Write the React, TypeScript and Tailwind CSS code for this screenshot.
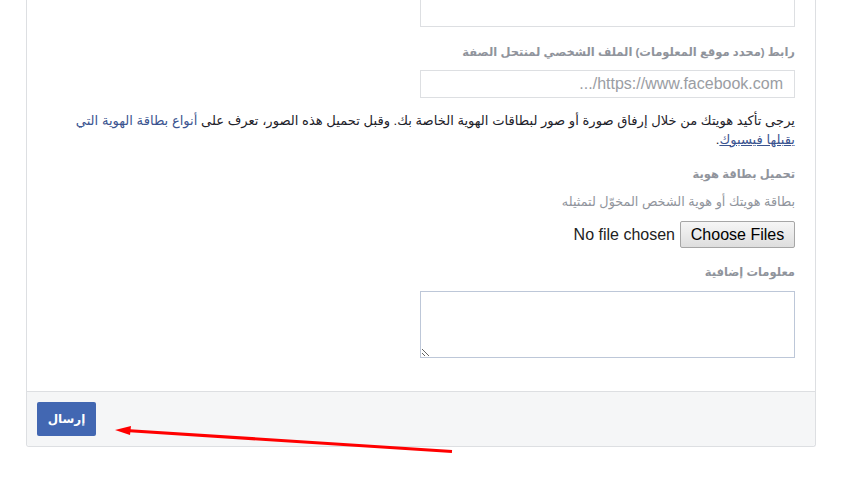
import React from "react";

// Verification form footer section (RTL), with a red annotation arrow over the submit button

const font = { fontFamily: '"Liberation Sans", "DejaVu Sans", sans-serif' };

function FileRow() {
  return (
    <div className="mt-[11px] flex items-center gap-[5px]" dir="rtl">
      <div className="flex h-[27px] w-[115px] items-center justify-center rounded-[2px] border border-[#a6a6a6] bg-gradient-to-b from-[#f6f6f6] to-[#dedede] text-[16px] text-black">
        Choose Files
      </div>
      <span className="text-[16px] text-[#222]">No file chosen</span>
    </div>
  );
}

export default function App() {
  return (
    <div className="relative h-[503px] w-[852px] overflow-hidden bg-white" style={font}>
      <div className="ml-[26px] w-[790px] rounded-b-[3px] border border-t-0 border-[#dddfe2]">
        <div dir="rtl" className="px-[20px] pb-[33px]">
          <input
            type="text"
            className="-mt-px block h-[28px] w-[375px] border border-[#dddfe2] bg-white outline-none"
          />
          <div className="mt-[17px] text-[11.5px] leading-[16px] font-bold text-[#90949c]">
            رابط (محدد موقع المعلومات) الملف الشخصي لمنتحل الصفة
          </div>
          <input
            type="text"
            placeholder="https://www.facebook.com/..."
            className="mt-[10px] block h-[28px] w-[375px] border border-[#dddfe2] bg-white px-[11px] text-[16px] outline-none placeholder:text-[#9a9da3]"
          />
          <p className="mt-[13px] text-[13.1px] leading-[19px] text-[#1d2129]">
            يرجى تأكيد هويتك من خلال إرفاق صورة أو صور لبطاقات الهوية الخاصة بك. وقبل تحميل هذه الصور، تعرف على{" "}
            <span className="text-[#3b5490]">أنواع بطاقة الهوية التي</span>
            <br />
            <span className="text-[#3b5490] underline">يقبلها فيسبوك</span>.
          </p>
          <div className="mt-[17px] text-[11.5px] leading-[16px] font-bold text-[#90949c]">تحميل بطاقة هوية</div>
          <div className="mt-[12px] text-[12.8px] leading-[16px] text-[#90949c]">
            بطاقة هويتك أو هوية الشخص المخوّل لتمثيله
          </div>
          <FileRow />
          <div className="mt-[16px] text-[11.5px] leading-[16px] font-bold text-[#90949c]">معلومات إضافية</div>
          <textarea className="mt-[11px] block h-[67px] w-[375px] resize border border-[#bdc7d8] bg-white outline-none" />
        </div>
        <div className="rounded-b-[3px] border-t border-[#dddfe2] bg-[#f5f6f7] px-[10px] py-[10px]">
          <button className="flex h-[34px] w-[59px] items-center justify-center rounded-[2px] bg-[#4267b2] text-[12px] font-bold text-white">
            إرسال
          </button>
        </div>
      </div>

      <svg className="absolute left-0 top-0" width="852" height="503" viewBox="0 0 852 503">
        <line x1="452" y1="451.5" x2="126" y2="430.5" stroke="#ff0000" strokeWidth="3" />
        <polygon points="115,430 131,426 130,435" fill="#ff0000" />
      </svg>
    </div>
  );
}
